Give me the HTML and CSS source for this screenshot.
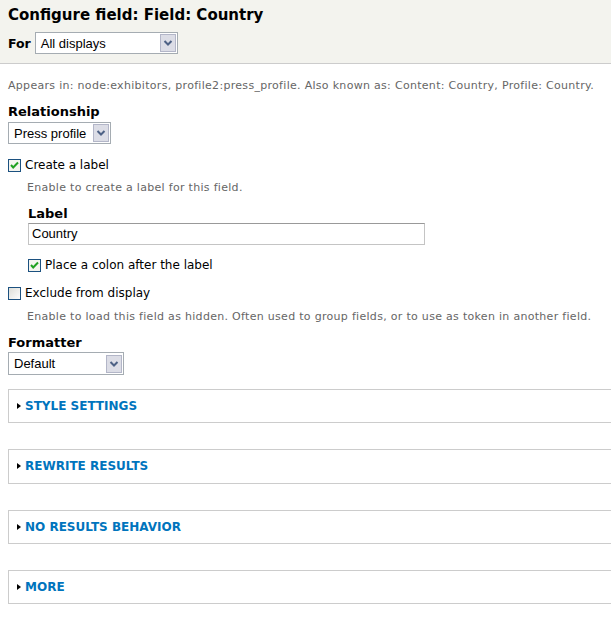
FILE: index.html
```html
<!DOCTYPE html>
<html lang="en">
<head>
    <meta charset="UTF-8">
    <title>Configure field: Field: Country</title>
    <link rel="stylesheet" href="styles.css">
</head>
<body>
    <div class="header">
        <h1>Configure field: Field: Country</h1>
        <div class="for-row">
            <b>For</b>
            <div class="select select-for">
                <span>All displays</span>
                <svg class="arrow" width="16" height="18" viewBox="0 0 16 18"><rect x="0.5" y="0.5" width="15" height="17" fill="#dcdde6" stroke="#b3b6c8"/><path d="M4.5 7 L8 10.5 L11.5 7" fill="none" stroke="#4d6185" stroke-width="2"/></svg>
            </div>
        </div>
    </div>

    <div class="content">
        <p class="description first">Appears in: node:exhibitors, profile2:press_profile. Also known as: Content: Country, Profile: Country.</p>

        <div class="form-item">
            <label class="title">Relationship</label>
            <div class="select select-rel">
                <span>Press profile</span>
                <svg class="arrow" width="16" height="18" viewBox="0 0 16 18"><rect x="0.5" y="0.5" width="15" height="17" fill="#dcdde6" stroke="#b3b6c8"/><path d="M4.5 7 L8 10.5 L11.5 7" fill="none" stroke="#4d6185" stroke-width="2"/></svg>
            </div>
        </div>

        <div class="check check-first">
            <svg class="box" width="13" height="13" viewBox="0 0 13 13"><rect x="0.5" y="0.5" width="12" height="12" fill="#f4f4ef" stroke="#1c5180"/><path d="M3 6 L5.2 8.5 L10 3.5" fill="none" stroke="#21a121" stroke-width="2"/></svg>
            <span>Create a label</span>
        </div>
        <p class="description indent indent-first">Enable to create a label for this field.</p>

        <div class="sub">
            <label class="title">Label</label>
            <div class="textfield">Country</div>
            <div class="check">
                <svg class="box" width="13" height="13" viewBox="0 0 13 13"><rect x="0.5" y="0.5" width="12" height="12" fill="#f4f4ef" stroke="#1c5180"/><path d="M3 6 L5.2 8.5 L10 3.5" fill="none" stroke="#21a121" stroke-width="2"/></svg>
                <span>Place a colon after the label</span>
            </div>
        </div>

        <div class="check">
            <svg class="box" width="13" height="13" viewBox="0 0 13 13"><defs><linearGradient id="g" x1="0" y1="0" x2="1" y2="1"><stop offset="0" stop-color="#dcdcd6"/><stop offset="1" stop-color="#ffffff"/></linearGradient></defs><rect x="0.5" y="0.5" width="12" height="12" fill="url(#g)" stroke="#1c5180"/></svg>
            <span>Exclude from display</span>
        </div>
        <p class="description indent">Enable to load this field as hidden. Often used to group fields, or to use as token in another field.</p>

        <div class="form-item form-item-last">
            <label class="title">Formatter</label>
            <div class="select select-fmt">
                <span>Default</span>
                <svg class="arrow" width="16" height="18" viewBox="0 0 16 18"><rect x="0.5" y="0.5" width="15" height="17" fill="#dcdde6" stroke="#b3b6c8"/><path d="M4.5 7 L8 10.5 L11.5 7" fill="none" stroke="#4d6185" stroke-width="2"/></svg>
            </div>
        </div>

        <div class="fieldset fieldset-first"><span class="tri"></span><a href="#">Style settings</a></div>
        <div class="fieldset"><span class="tri"></span><a href="#">Rewrite results</a></div>
        <div class="fieldset"><span class="tri"></span><a href="#">No results behavior</a></div>
        <div class="fieldset"><span class="tri"></span><a href="#">More</a></div>
    </div>
</body>
</html>
```

FILE: styles.css
```css
body {
    margin: 0;
    font-family: "DejaVu Sans", Verdana, sans-serif;
    color: #000;
    background-color: #fff;
    overflow: hidden;
}
.header {
    background-color: #f3f3ee;
    border-bottom: 1px solid #cccccc;
    padding: 6px 8px 8px 8px;
    height: 49px;
}
h1 {
    margin: 0;
    font-size: 15px;
    font-weight: bold;
    line-height: 18px;
}
.for-row {
    display: flex;
    align-items: center;
    gap: 4px;
    margin-top: 8px;
    font-size: 12.5px;
}
.select {
    display: flex;
    align-items: center;
    justify-content: space-between;
    box-sizing: border-box;
    height: 22px;
    border: 1px solid #a5acb2;
    background-color: #fff;
    font-family: "Liberation Sans", Arial, sans-serif;
    font-size: 13px;
    padding: 0 1px 0 5px;
}
.select-for {
    width: 143px;
}
.select-rel {
    width: 103px;
    margin-top: 2px;
}
.select-fmt {
    width: 116px;
    height: 23px;
}
.content {
    padding: 0 8px;
}
.description {
    color: #666;
    font-size: 11px;
    letter-spacing: 0.3px;
    margin: 0;
    line-height: 14px;
}
.first {
    margin-top: 15px;
}
.indent {
    margin: 9px 0 0 19px;
}
.indent-first {
    margin-top: 8px;
}
.form-item {
    margin-top: 11px;
}
.form-item-last {
    margin-top: 11px;
}
.title {
    display: block;
    font-weight: bold;
    font-size: 13px;
    line-height: 16px;
    margin-bottom: 1px;
}
.check {
    display: flex;
    align-items: center;
    gap: 4px;
    font-size: 12px;
    margin-top: 12px;
    line-height: 16px;
}
.check-first {
    margin-top: 13px;
}
.sub {
    margin: 11px 0 0 20px;
}
.textfield {
    box-sizing: border-box;
    width: 397px;
    height: 22px;
    border: 1px solid #c4c4c4;
    border-top-color: #999;
    font-family: "Liberation Sans", Arial, sans-serif;
    font-size: 13px;
    line-height: 20px;
    padding: 0 3px;
}
.sub .check {
    margin-top: 12px;
}
.fieldset {
    display: flex;
    align-items: center;
    gap: 4px;
    box-sizing: border-box;
    height: 34.33px;
    width: calc(100% + 20px);
    border: 1px solid #cccccc;
    margin-top: 26px;
    padding-left: 8px;
}
.fieldset-first {
    margin-top: 14px;
}
.tri {
    width: 0;
    height: 0;
    border-top: 3.5px solid transparent;
    border-bottom: 3.5px solid transparent;
    border-left: 4px solid #000;
}
.fieldset a {
    color: #0074bd;
    text-decoration: none;
    text-transform: uppercase;
    font-weight: bold;
    font-size: 12px;
}
```
